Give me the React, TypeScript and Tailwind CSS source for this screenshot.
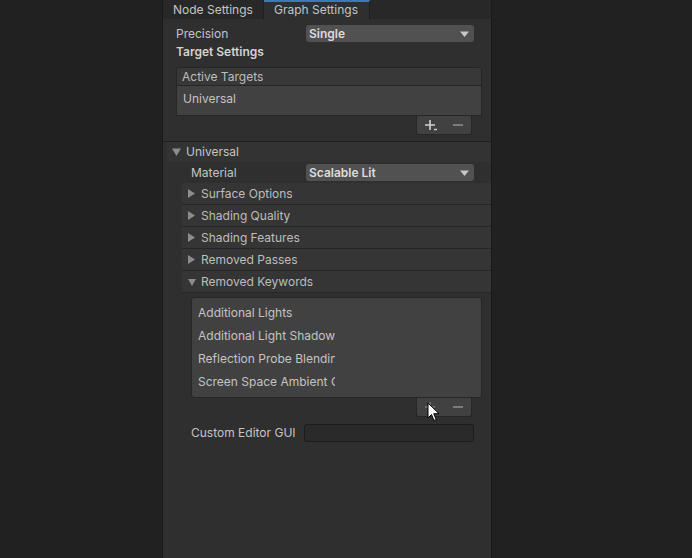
import type { ReactNode } from 'react'

const font = { fontFamily: 'Inter, "Noto Sans", sans-serif' }

function Dropdown({ value }: { value: string }) {
  return (
    <div className="flex h-[17px] w-[168px] items-center justify-between rounded-[3px] bg-[#515151] pl-[3px] pr-[5px] text-[12px] font-semibold text-[#dcdcdc]">
      <span>{value}</span>
      <svg width="9" height="6" viewBox="0 0 9 6"><path d="M0 0.5h9L4.5 6z" fill="#c8c8c8" /></svg>
    </div>
  )
}

function Row({ label, children, pl }: { label: string; children: ReactNode; pl: string }) {
  return (
    <div className={`flex h-full items-center ${pl}`}>
      <span className="flex-1 text-[12px] text-[#c4c4c4]">{label}</span>
      <div className="mr-[17px]">{children}</div>
    </div>
  )
}

function Footer({ dim }: { dim?: boolean }) {
  return (
    <div className="ml-auto mr-[19px] flex h-[19px] w-[56px] shrink-0 items-center justify-center gap-[14px] rounded-b-[3px] border-x border-b border-[#262626] bg-[#414141]">
      <svg width="14" height="12" viewBox="0 0 14 12">
        <path d="M5 1v10M0 6h10" stroke={dim ? '#7a7a7a' : '#d0d0d0'} strokeWidth="1.6" />
        <path d="M9 10.5h3" stroke="#d0d0d0" strokeWidth="1.4" />
      </svg>
      <svg width="10" height="12" viewBox="0 0 10 12"><path d="M0 6h10" stroke="#8a8a8a" strokeWidth="1.6" /></svg>
    </div>
  )
}

function Foldout({ label, open }: { label: string; open?: boolean }) {
  return (
    <div className="flex h-[22px] items-center border-b border-[#262626] bg-[#353535] pl-[6px] text-[12px] text-[#bdbdbd]">
      {open ? (
        <svg width="8" height="8" viewBox="0 0 8 8" className="mr-[5px]"><path d="M0 1h8L4 8z" fill="#8c8c8c" /></svg>
      ) : (
        <svg width="8" height="9" viewBox="0 0 8 9" className="mr-[5px]"><path d="M0 0l7 4.5L0 9z" fill="#8c8c8c" /></svg>
      )}
      <span>{label}</span>
    </div>
  )
}

export default function App() {
  const keywords = ['Additional Lights', 'Additional Light Shadows', 'Reflection Probe Blending', 'Screen Space Ambient Occlusion']

  return (
    <div className="relative h-[558px] w-[692px] overflow-hidden bg-[#212121]" style={font}>
      <div className="ml-[162px] flex h-full w-[330px] flex-col border-x border-[#1a1a1a] bg-[#2f2f2f]">
        <div className="flex h-[19px] shrink-0 bg-[#282828] text-[12px] text-[#c4c4c4]">
          <div className="flex w-[101px] items-center border-r border-[#1f1f1f] pl-[10px]">Node Settings</div>
          <div className="flex w-[106px] items-center border-t-2 border-r border-t-[#3a79bb] border-r-[#1f1f1f] bg-[#2f2f2f] pb-[2px] pl-[10px]">Graph Settings</div>
        </div>

        <div className="mt-[6px] h-[17px] shrink-0">
          <Row label="Precision" pl="pl-[13px]"><Dropdown value="Single" /></Row>
        </div>
        <div className="mt-[1px] h-[17px] shrink-0 pl-[13px] text-[12px] font-semibold leading-[17px] text-[#d2d2d2]">Target Settings</div>

        <div className="ml-[13px] mr-[9px] mt-[7px] shrink-0 overflow-hidden rounded-t-[3px] border border-[#262626]">
          <div className="flex h-[18px] items-center border-b border-[#262626] bg-[#383838] pl-[5px] text-[12px] text-[#bdbdbd]">Active Targets</div>
          <div className="h-[29px] bg-[#414141] pl-[6px] pt-[4px] text-[12px] leading-[17px] text-[#c4c4c4]">Universal</div>
        </div>
        <Footer />

        <div className="mt-[6px] shrink-0 border-t border-[#1f1f1f]">
          <div className="ml-[4px] flex h-[20px] items-center bg-[#333333] pl-[5px] text-[12px] text-[#c4c4c4]">
            <svg width="9" height="8" viewBox="0 0 9 8" className="mr-[5px]"><path d="M0 0.5h9L4.5 8z" fill="#8c8c8c" /></svg>
            <span>Universal</span>
          </div>
          <div className="h-[21px]">
            <Row label="Material" pl="pl-[28px]"><Dropdown value="Scalable Lit" /></Row>
          </div>
          <div className="ml-[19px] flex flex-col">
            <Foldout label="Surface Options" />
            <Foldout label="Shading Quality" />
            <Foldout label="Shading Features" />
            <Foldout label="Removed Passes" />
            <Foldout label="Removed Keywords" open />
          </div>
        </div>

        <div className="ml-[28px] mr-[9px] mt-[4px] flex h-[101px] shrink-0 flex-col rounded-[3px] border border-[#262626] bg-[#414141] pt-[3px]">
          {keywords.map(k => (
            <div key={k} className="flex h-[23px] items-center pl-[6px]">
              <span className="w-[137px] overflow-hidden whitespace-nowrap text-[12px] text-[#c4c4c4]">{k}</span>
            </div>
          ))}
        </div>
        <Footer dim />

        <div className="mt-[7px] h-[18px] shrink-0">
          <Row label="Custom Editor GUI" pl="pl-[28px]">
            <div className="h-[18px] w-[170px] rounded-[3px] border border-[#1c1c1c] bg-[#2a2a2a]" />
          </Row>
        </div>
      </div>

      <svg className="absolute left-[427px] top-[402px]" width="13" height="20" viewBox="0 0 13 20">
        <path d="M1 1v15l3.5-3.5 2.5 6 2.2-1-2.5-5.8H12z" fill="#fff" stroke="#000" strokeWidth="1" />
      </svg>
    </div>
  )
}
